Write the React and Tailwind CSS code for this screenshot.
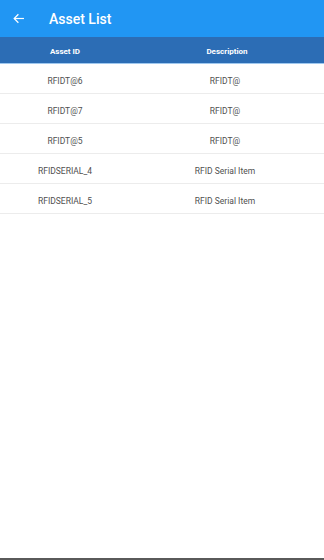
import React from "react";

const rows = [
  ["RFIDT@6", "RFIDT@"],
  ["RFIDT@7", "RFIDT@"],
  ["RFIDT@5", "RFIDT@"],
  ["RFIDSERIAL_4", "RFID Serial Item"],
  ["RFIDSERIAL_5", "RFID Serial Item"],
];

export default function App() {
  return (
    <div
      className="w-[324px] h-[560px] bg-white flex flex-col"
      style={{ fontFamily: "Roboto, 'Noto Sans', sans-serif" }}
    >
      <div className="h-[37px] bg-[#2196f3] flex items-center shrink-0">
        <div className="w-[49px] flex items-center pl-[12px]">
          <svg width="13" height="13" viewBox="0 0 24 24" fill="none" stroke="white" strokeWidth="2.2" strokeLinecap="square">
            <path d="M21 12H5" />
            <path d="M11 5l-7 7 7 7" />
          </svg>
        </div>
        <span className="text-white text-[14px] font-medium leading-none">Asset List</span>
      </div>
      <div className="h-[26px] pt-[3px] bg-[#2c6db5] flex items-center shrink-0 text-white text-[8px] font-bold">
        <div className="w-[130px] text-center">Asset ID</div>
        <div className="flex-1 text-center">Description</div>
      </div>
      <div className="h-[1px] bg-[#9fc8ef] shrink-0" />
      {rows.map(([id, d], i) => (
        <div
          key={i}
          className="h-[30px] pt-[5px] flex items-center border-b border-[#ececec] text-[8.5px] text-[#4f4f4f] shrink-0"
        >
          <div className="w-[130px] text-center">{id}</div>
          <div className="flex-1 text-center pr-[4px]">{d}</div>
        </div>
      ))}
      <div className="flex-1" />
      <div className="h-[2px] bg-[#5a5a5a] shrink-0" />
    </div>
  );
}
